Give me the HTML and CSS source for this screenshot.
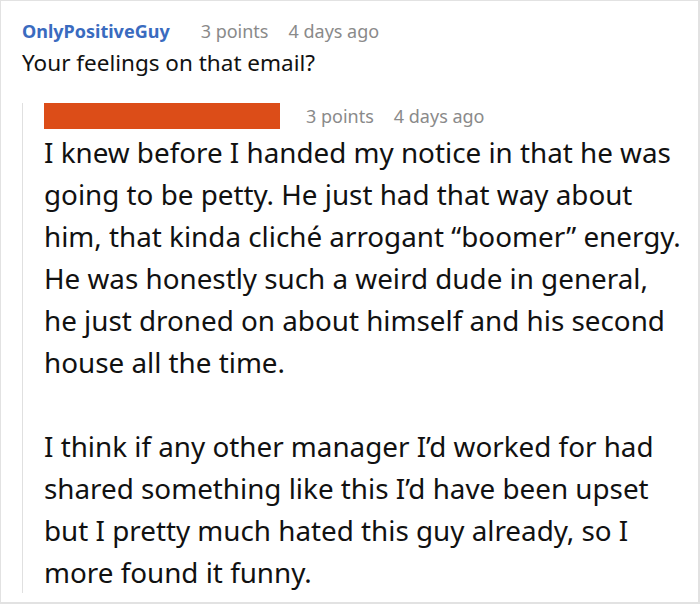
FILE: index.html
```html
<!DOCTYPE html>
<html>
<head>
<meta charset="utf-8">
<link rel="stylesheet" href="styles.css">
</head>
<body>
<div class="frame">
  <div class="comment">
    <div class="meta">
      <span class="author">OnlyPositiveGuy</span>
      <span class="info">3 points</span>
      <span class="info">4 days ago</span>
    </div>
    <p class="question">Your feelings on that email?</p>
    <div class="reply">
      <div class="meta reply-meta">
        <span class="redacted"></span>
        <span class="info">3 points</span>
        <span class="info">4 days ago</span>
      </div>
      <div class="body">
        <p>I knew before I handed my notice in that he was<br>going to be petty. He just had that way about<br>him, that kinda cliché arrogant “boomer” energy.<br>He was honestly such a weird dude in general,<br>he just droned on about himself and his second<br>house all the time.</p>
        <p>I think if any other manager I’d worked for had<br>shared something like this I’d have been upset<br>but I pretty much hated this guy already, so I<br>more found it funny.</p>
      </div>
    </div>
  </div>
</div>
</body>
</html>
```
FILE: styles.css
```css
html, body {
  margin: 0;
  padding: 0;
  background: #ffffff;
}
body {
  font-family: "Noto Sans", "Open Sans", sans-serif;
  color: #111;
}
.frame {
  width: 700px;
  height: 604px;
  box-sizing: border-box;
  border: 1px solid #e2e2e2;
  border-right-width: 2px;
  border-bottom-width: 2px;
  overflow: hidden;
}
.comment {
  padding: 17px 0 0 21px;
}
.meta {
  display: flex;
  align-items: center;
  font-size: 18px;
  line-height: 26px;
  white-space: nowrap;
}
.author {
  color: #3a6bbf;
  font-weight: bold;
  margin-right: 31px;
}
.info {
  color: #8a8a8a;
  margin-right: 20px;
}
.question {
  margin: 4px 0 0 0;
  font-size: 22.5px;
  line-height: 30px;
  color: #111;
}
.reply {
  margin-top: 33px;
  border-left: 1px solid #e0e0e0;
  padding-left: 21px;
  padding-bottom: 0;
}
.reply-meta {
  margin-top: -8px;
  height: 26px;
}
.redacted {
  display: inline-block;
  width: 236px;
  height: 26px;
  background: #dc4d18;
  margin-right: 26px;
}
.body {
  margin-top: 2px;
  width: 650px;
  font-size: 27.8px;
  line-height: 42px;
  white-space: nowrap;
}
.body p {
  margin: 0 0 42px 0;
}
.body p:last-child {
  margin-bottom: -7px;
}
```
